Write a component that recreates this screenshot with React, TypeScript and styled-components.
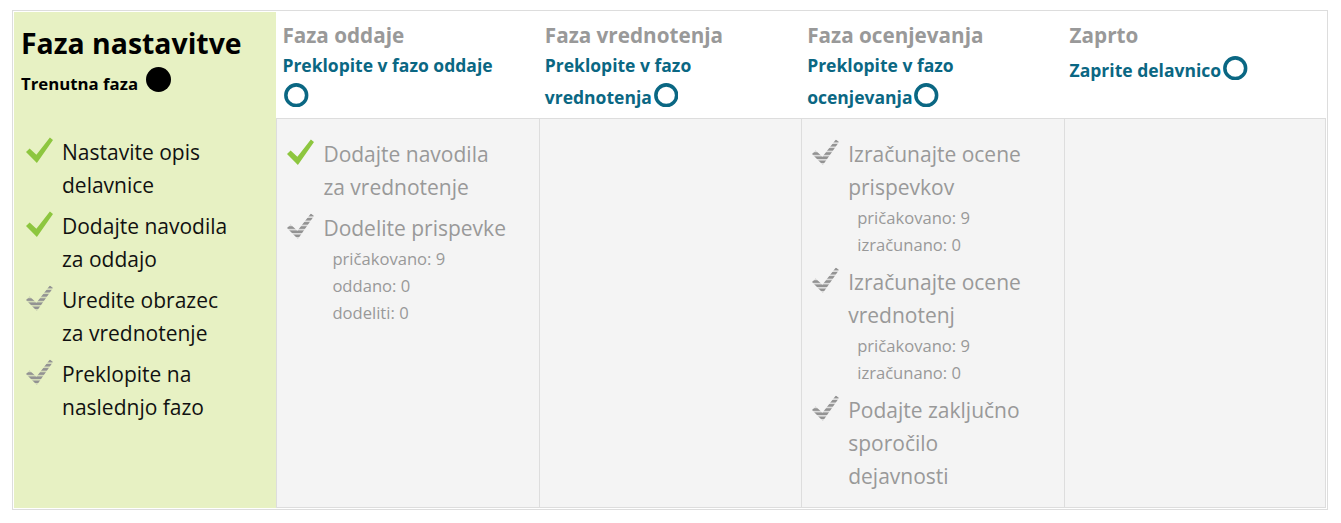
import React, { useId } from "react";
import styled, { createGlobalStyle } from "styled-components";

const GlobalStyle = createGlobalStyle`
  html, body { margin: 0; padding: 0; background: #fff; }
  body { font-family: "Open Sans", "Noto Sans", sans-serif; color: #1a1a1a; }
  * { box-sizing: border-box; }
`;

type Task = { text: string; done: boolean; details?: string[] };
type Phase = { title: string; active?: boolean; action?: string; tasks: Task[] };

const phases: Phase[] = [
  {
    title: "Faza nastavitve",
    active: true,
    tasks: [
      { text: "Nastavite opis delavnice", done: true },
      { text: "Dodajte navodila za oddajo", done: true },
      { text: "Uredite obrazec za vrednotenje", done: false },
      { text: "Preklopite na naslednjo fazo", done: false },
    ],
  },
  {
    title: "Faza oddaje",
    action: "Preklopite v fazo oddaje",
    tasks: [
      { text: "Dodajte navodila za vrednotenje", done: true },
      {
        text: "Dodelite prispevke",
        done: false,
        details: ["pričakovano: 9", "oddano: 0", "dodeliti: 0"],
      },
    ],
  },
  { title: "Faza vrednotenja", action: "Preklopite v fazo vrednotenja", tasks: [] },
  {
    title: "Faza ocenjevanja",
    action: "Preklopite v fazo ocenjevanja",
    tasks: [
      {
        text: "Izračunajte ocene prispevkov",
        done: false,
        details: ["pričakovano: 9", "izračunano: 0"],
      },
      {
        text: "Izračunajte ocene vrednotenj",
        done: false,
        details: ["pričakovano: 9", "izračunano: 0"],
      },
      { text: "Podajte zaključno sporočilo dejavnosti", done: false },
    ],
  },
  { title: "Zaprto", action: "Zaprite delavnico", tasks: [] },
];

const Plan = styled.div`
  margin: 10px 13px 0 12px;
  border: 1px solid #ddd;
  padding: 1px;
  display: grid;
  grid-template-columns: repeat(5, 1fr);
`;

const PhaseHeader = styled.div<{ $active?: boolean }>`
  min-height: 106px;
  padding: ${(p) => (p.$active ? "14px 24px 8px 7px" : "11px 24px 8px 6px")};
  background: ${(p) => (p.$active ? "#e7f1c3" : "#fff")};
`;

const PhaseTitle = styled.div<{ $active?: boolean }>`
  font-weight: 700;
  font-size: ${(p) => (p.$active ? "28.4px" : "20.7px")};
  line-height: 1.2;
  color: ${(p) => (p.$active ? "#000" : "#999")};
`;

const CurrentLabel = styled.div`
  margin-top: 7px;
  font-weight: 700;
  font-size: 16.8px;
  line-height: 27px;
  color: #000;
`;

const SwitchLink = styled.a`
  display: block;
  margin-top: 4px;
  font-weight: 700;
  font-size: 17.5px;
  line-height: 27px;
  color: #0a6783;
  text-decoration: none;
`;

const MarkerIcon = styled.svg<{ $size: number; $drop: number; $gap: number; $lift: number }>`
  display: inline-block;
  width: ${(p) => p.$size}px;
  height: ${(p) => p.$size}px;
  vertical-align: -${(p) => p.$drop}px;
  margin-left: ${(p) => p.$gap}px;
  margin-top: ${(p) => p.$lift}px;
`;

const TaskCell = styled.div<{ $active?: boolean; $last?: boolean }>`
  padding: ${(p) => (p.$active ? "18px 36px 14px 12px" : "19px 28px 14px 10px")};
  background: ${(p) => (p.$active ? "#e7f1c3" : "#f4f4f4")};
  border: ${(p) => (p.$active ? "none" : "1px solid #ddd")};
  border-right: ${(p) => (p.$last ? "1px solid #ddd" : "none")};
  color: ${(p) => (p.$active ? "#111" : "#999")};
`;

const TaskList = styled.ul`
  list-style: none;
  margin: 0;
  padding: 0;
  display: flex;
  flex-direction: column;
  gap: 8px;
`;

const TaskItem = styled.li`
  display: flex;
  align-items: flex-start;
  gap: 9px;
`;

const TaskIcon = styled.svg`
  flex: none;
  width: 27px;
  height: 27px;
  margin-top: 1px;
`;

const TaskBody = styled.div`
  flex: 1;
  min-width: 0;
`;

const TaskText = styled.div`
  font-size: 21px;
  line-height: 33px;
`;

const Details = styled.ul`
  list-style: none;
  margin: 0;
  padding: 0 0 0 9px;
  font-size: 16.6px;
  line-height: 27px;
`;

const CHECK = "0,14.5 3.5,11 10,17 23,0.5 26,3 10.5,25";

function DoneIcon() {
  return (
    <TaskIcon viewBox="0 0 26 26">
      <polygon points={CHECK} fill="#8dc63f" />
    </TaskIcon>
  );
}

function TodoIcon() {
  const id = "st" + useId().replace(/[^a-zA-Z0-9]/g, "");
  return (
    <TaskIcon viewBox="0 0 26 26">
      <defs>
        <pattern id={id} width="26" height="4" patternUnits="userSpaceOnUse">
          <rect y="0.6" width="26" height="2.8" fill="#939393" />
        </pattern>
      </defs>
      <polygon points={CHECK} fill={`url(#${id})`} />
    </TaskIcon>
  );
}

function RingIcon() {
  return (
    <MarkerIcon $size={24.5} $drop={4} $gap={2} $lift={4} viewBox="0 0 25 25">
      <circle cx="12.5" cy="12.5" r="10.6" fill="none" stroke="#0a6783" strokeWidth="3.6" />
    </MarkerIcon>
  );
}

function DotIcon() {
  return (
    <MarkerIcon $size={25} $drop={2} $gap={8} $lift={0} viewBox="0 0 25 25">
      <circle cx="12.5" cy="12.5" r="12.5" fill="#000" />
    </MarkerIcon>
  );
}

export default function App() {
  return (
    <>
      <GlobalStyle />
      <Plan>
        {phases.map((ph) => (
          <PhaseHeader key={ph.title} $active={ph.active}>
            <PhaseTitle $active={ph.active}>{ph.title}</PhaseTitle>
            {ph.active ? (
              <CurrentLabel>
                Trenutna faza
                <DotIcon />
              </CurrentLabel>
            ) : (
              <SwitchLink href="#">
                {ph.action}
                <RingIcon />
              </SwitchLink>
            )}
          </PhaseHeader>
        ))}
        {phases.map((ph, i) => (
          <TaskCell key={ph.title + "-tasks"} $active={ph.active} $last={i === phases.length - 1}>
            <TaskList>
              {ph.tasks.map((t) => (
                <TaskItem key={t.text}>
                  {t.done ? <DoneIcon /> : <TodoIcon />}
                  <TaskBody>
                    <TaskText>{t.text}</TaskText>
                    {t.details && (
                      <Details>
                        {t.details.map((d) => (
                          <li key={d}>{d}</li>
                        ))}
                      </Details>
                    )}
                  </TaskBody>
                </TaskItem>
              ))}
            </TaskList>
          </TaskCell>
        ))}
      </Plan>
    </>
  );
}
